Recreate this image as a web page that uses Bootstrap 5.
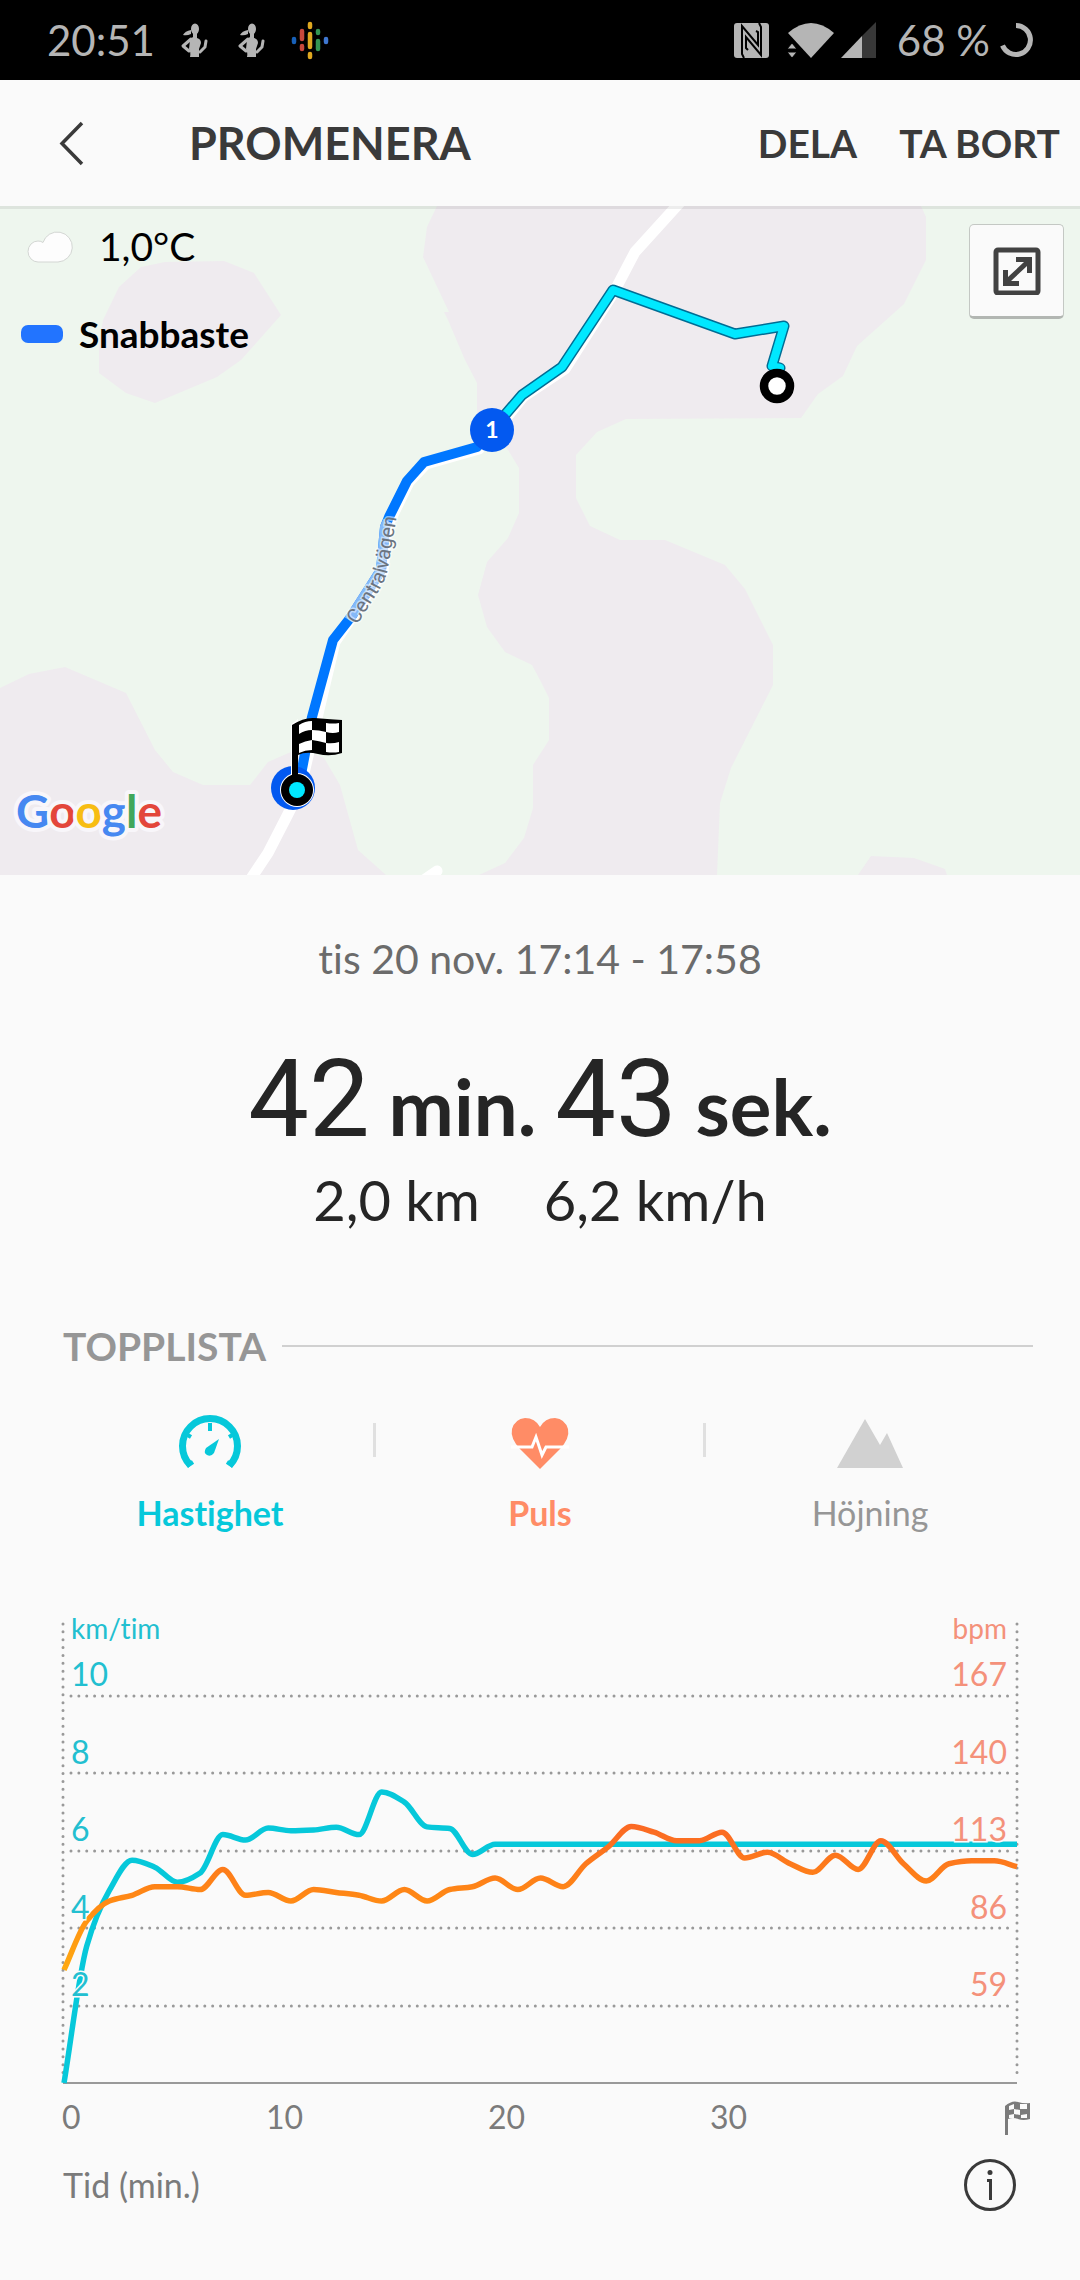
<!DOCTYPE html>
<html lang="sv">
<head>
<meta charset="utf-8">
<meta name="viewport" content="width=device-width, initial-scale=1">
<title>Promenera</title>
<link href="https://cdn.jsdelivr.net/npm/bootstrap@5.3.0/dist/css/bootstrap.min.css" rel="stylesheet">
<style>
  :root { --ink: #3a3a3a; --speed: #06c8da; --pulse: #ff8c66; --muted-ink: #969696; }
  body { font-family: Lato, "Noto Sans", sans-serif; font-variant-ligatures: none; background: #fafafa; color: #252525; }
  button { font-family: inherit; font-variant-ligatures: none; }
  svg { display: block; }
  .status-bar { height: 80px; background: #000; color: #b5b5b5; font-size: 42px; line-height: 80px; font-weight: 400; padding: 0 46px 0 47px; }
  .app-bar { height: 126px; padding: 0 20px 0 48px; background: #fafafa; color: var(--ink); position: relative; z-index: 2; box-shadow: 0 3px 0 rgba(0,0,0,.07); }
  .app-bar h1 { font-size: 45px; line-height: 56px; font-weight: 700; }
  .app-bar .btn { color: var(--ink); line-height: 56px; }
  .bar-actions { gap: 42px; }
  .bar-action { font-size: 39px; font-weight: 700; }
  .back-btn { margin-right: 94px; }
  .status-left { gap: 21px; }
  .status-level { margin: 0 8px 0 20px; }
  .map-legend { position: absolute; top: 12px; left: 21px; color: #000; }
  .map-temp { font-size: 39px; line-height: 56px; font-weight: 400; }
  .map-fastest { font-size: 37px; line-height: 48px; font-weight: 700; margin-top: 36px; }
  .swatch { width: 42px; height: 18px; border-radius: 7px; background: #2274ff; }
  .expand-btn { position: absolute; top: 18px; right: 16px; width: 95px; height: 95px; background: #fafafa; border: 1px solid #c4c8c4; border-bottom: 3px solid #b2b6b2; border-radius: 5px; }
  .when { font-size: 41px; line-height: 56px; color: #6b6b6b; margin-top: 56px; }
  .duration { font-size: 78px; line-height: 120px; font-weight: 700; margin-top: 52px; }
  .duration .num { font-family: Roboto, sans-serif; font-size: 108px; font-weight: 400; }
  .totals { font-size: 56px; line-height: 68px; gap: 64px; }
  .toplist-head { margin: 84px 47px 0 63px; gap: 16px; }
  .toplist-head h2 { font-size: 39px; line-height: 56px; font-weight: 700; color: var(--muted-ink); }
  .toplist-head .rule { height: 2px; background: #d0d0d0; }
  .metrics { margin: 41px 45px 0; }
  .metric { font-size: 34px; line-height: 40px; color: var(--muted-ink); border: 0; }
  .metric svg { height: 56px; margin-bottom: 22px; }
  .metric-sep { width: 3px; height: 34px; background: #e0e0e0; margin: 8px -1px 0 -2px; }
  .is-speed { color: var(--speed); font-weight: 700; }
  .is-pulse { color: var(--pulse); font-weight: 700; }
  .chart { margin-top: 66px; }
  .tick { font-size: 32px; }
  .unit { font-size: 28px; }
  .halo { stroke: #fafafa; stroke-width: 3px; paint-order: stroke; }
  .dots { stroke: #999; stroke-width: 3; stroke-linecap: round; stroke-dasharray: 0 7.87; }
  .chart-foot { padding: 0 63px; margin-top: 14px; color: #7b7b7b; font-size: 34px; line-height: 56px; }
</style>
</head>
<body>

<div class="status-bar d-flex align-items-center justify-content-between">
  <div class="status-left d-flex align-items-center">
    <span>20:51</span>
    <svg width="36" height="40" viewBox="2 0 36 40" fill="#b5b5b5">
      <g id="runner"><ellipse cx="21" cy="9" rx="4" ry="5.500"/><path d="M17 10q-6 1-8 5q4 1 8-1z"/><path d="M19 13h4v5q4 1 4 5l-2 6v8h-9q1-5-1-8l1-9q1-2 3-3z"/><path d="M17 19L9 26L15 31M26 32L31 27L32 21" fill="none" stroke="#b5b5b5" stroke-width="3" stroke-linejoin="round" stroke-linecap="round"/></g>
    </svg>
    <svg width="36" height="40" viewBox="2 0 36 40" fill="#b5b5b5"><use href="#runner"/></svg>
    <svg width="40" height="40" viewBox="0 0 40 40" stroke-width="4.500" stroke-linecap="round">
      <path stroke="#1860b8" d="M4 19v3"/><path stroke="#c8483c" d="M12 11v8M12 26v3"/><path stroke="#dfa820" d="M20 4v3M20 14v13M20 34v3"/><path stroke="#349552" d="M28 11v2M28 21v8"/><path stroke="#3f78d0" d="M36 19v3"/>
    </svg>
  </div>
  <div class="d-flex align-items-center">
    <svg width="35" height="35" viewBox="0 0 35 35"><rect width="35" height="35" rx="3" fill="#b5b5b5"/><path d="M10 35L8 31V3L24 22V9L22 8M25 0L27 4V32L12 14V25L14 27" fill="none" stroke="#000" stroke-width="2"/></svg>
    <svg class="ms-3" width="52" height="36" viewBox="0 0 52 36" fill="#b5b5b5"><path d="M3 11Q26-9 49 11L26 36z"/><path d="M2 27l5-6l5 6zM2 30h10l-5 6z" stroke="#000" stroke-width="1"/></svg>
    <svg class="ms-1" width="36" height="36" viewBox="0 0 36 36"><path d="M35 0V36H21V14z" fill="#383838"/><path d="M21 14V36H0z" fill="#b5b5b5"/></svg>
    <span class="status-level">68&nbsp;%</span>
    <svg width="36" height="36" viewBox="0 0 36 36"><path d="M18 3.500A14.500 14.500 0 1 1 4.500 23.500" fill="none" stroke="#b5b5b5" stroke-width="5"/></svg>
  </div>
</div>

<header class="app-bar d-flex align-items-center">
  <button class="btn back-btn border-0 p-0" type="button" aria-label="Tillbaka">
    <svg width="47" height="48" viewBox="0 0 47 48"><path d="M34 4L14 24.500L34 45" fill="none" stroke="#3a3a3a" stroke-width="3.500"/></svg>
  </button>
  <h1 class="m-0 me-auto">PROMENERA</h1>
  <div class="bar-actions d-flex">
    <button class="btn bar-action border-0 p-0" type="button">DELA</button>
    <button class="btn bar-action border-0 p-0" type="button">TA BORT</button>
  </div>
</header>

<main>
  <section class="position-relative" aria-label="Karta">
    <svg width="100%" viewBox="0 206 1080 669">
      <rect y="206" width="1080" height="669" fill="#eef6ee"/>
      <g fill="#efebef">
        <path d="M165 262L224 261L254 273L281 315L241 360L217 377L155 403L126 393L99 373V345L103 320L119 287L141 267z"/>
        <path d="M437 206L427 227L423 257L449 312H444L448 320L465 360L477 383V417L508 450L519 468V513L508 538L487 562L478 595L487 627L505 652L532 665L540 680L549 698V740L533 765V808L524 838L505 863L479 875H717L720 803L731 768L773 685V645L745 589L725 565L665 540H620L590 526L576 498V455L597 432L626 419L801 418L818 394L843 376L857 346L904 304L926 260V217L921 206z"/>
        <path d="M0 688L29 674L65 667L126 693L155 750L173 772L203 785H250L268 762L300 748L324 758L340 785L358 850L386 875H0z"/>
        <path d="M858 875L871 856L914 858L945 869L947 875z"/>
      </g>
      <g fill="none" stroke="#fff" stroke-width="11" stroke-linejoin="round">
        <path d="M684 198L635 252L614 292L565 369L523 397L495 432L479 449L426 464L409 482L387 527L383 572L335 642L300 790L287 816L268 853L250 880"/>
        <path d="M424 880L437 871" stroke-linecap="round"/>
      </g>
      <g fill="none" stroke-linejoin="round" stroke-linecap="round">
        <path d="M492 430L477 447L424 462L407 481L389 517L385 527L381 570L351 617L333 640L312 717L298 790" stroke="#0077ff" stroke-width="10"/>
        <path d="M388 521L385 527L381 570L349 620" stroke="#84b8f8" stroke-width="10" stroke-linecap="butt"/>
        <path d="M780 368L772 366L784 326L735 334L613 290L562 367L522 395L492 430" stroke="#006d94" stroke-width="11"/>
        <path d="M780 368L772 366L784 326L735 334L613 290L562 367L522 395L492 430" stroke="#00e8ff" stroke-width="8"/>
      </g>
      <path id="roadName" d="M357 625L380 589Q386 578 388 568L398 508" fill="none"/>
      <text font-family="Roboto, sans-serif" font-size="20" fill="#6b7480" stroke="#fff" stroke-opacity=".5" stroke-width="3" paint-order="stroke"><textPath href="#roadName">Centralvägen</textPath></text>
      <circle cx="492" cy="430" r="22" fill="#0359f0"/>
      <text x="492" y="438" text-anchor="middle" font-size="23" font-weight="700" fill="#fff">1</text>
      <circle cx="777" cy="386" r="13" fill="#fff" stroke="#000" stroke-width="8.500"/>
      <circle cx="293" cy="788" r="22" fill="#0359f0"/>
      <path d="M292 725L297 721V778H292z" stroke="#fff" stroke-width="2"/>
      <circle cx="297" cy="790" r="17" fill="#fff"/><circle cx="297" cy="790" r="16"/><circle cx="297" cy="790" r="8" fill="#00e8ff"/>
      <path d="M292 725Q304 717 315 718T342 720V753Q330 757 318 754T298 755V782H292z"/>
      <g fill="#fff">
        <path d="M299 725Q305 721 312 721V730Q305 730 299 734zM326 723Q333 724 339 723V732Q333 734 326 732zM312 730Q319 730 326 732V743Q319 741 312 740zM299 744Q305 741 312 740V750Q305 750 299 753zM326 743Q333 744 339 742V752Q333 753 326 752z"/>
      </g>
      <text x="16" y="828" font-size="46" font-weight="700" stroke="#f8f6fa" stroke-width="8" stroke-linejoin="round" paint-order="stroke"><tspan fill="#4688f1">G</tspan><tspan fill="#e3463b">o</tspan><tspan fill="#f7bd13">o</tspan><tspan fill="#4688f1">g</tspan><tspan fill="#41a75c">l</tspan><tspan fill="#e3463b">e</tspan></text>
    </svg>

    <div class="map-legend">
      <div class="map-temp d-flex align-items-center">
        <svg width="78" height="40" viewBox="0 0 78 40"><path d="M17 36a9.500 10 0 0 1 0-21q3 0 5 1.500a15 15 0 1 1 15 19.500z" fill="#fdfdfd" stroke="#d3d6d3" stroke-width="1"/></svg>
        <span>1,0°C</span>
      </div>
      <div class="map-fastest d-flex align-items-center gap-3"><span class="swatch"></span><span>Snabbaste</span></div>
    </div>
    <button class="expand-btn p-0 d-flex align-items-center justify-content-center" type="button" aria-label="Visa hela kartan">
      <svg width="48" height="48" viewBox="0 0 48 48"><rect x="3" y="3" width="42" height="43" rx="2" fill="none" stroke="#424242" stroke-width="5"/><path d="M23 10H39V26H34V19L18 34H26V39H10V23H15V30L31 15H23z" fill="#424242"/></svg>
    </button>
  </section>

  <section class="text-center">
    <div class="when">tis 20 nov. 17:14 - 17:58</div>
    <div class="duration"><span class="num">42</span> min. <span class="num">43</span> sek.</div>
    <div class="totals d-flex justify-content-center"><span>2,0 km</span><span>6,2 km/h</span></div>
  </section>

  <section>
    <div class="toplist-head d-flex align-items-center">
      <h2 class="m-0">TOPPLISTA</h2><span class="rule flex-fill"></span>
    </div>
    <div class="metrics d-flex">
      <button class="metric is-speed btn p-0 flex-fill w-100" type="button">
        <svg class="mx-auto" width="64" viewBox="0 0 64 56" fill="none" stroke="#06c8da"><path d="M12.500 50.500A27.500 27.500 0 1 1 51.500 50.500" stroke-width="7"/><path d="M32 8V16M13 22l-5-3M51 22l5-3M15 47L9 51M49 47L55 51" stroke-width="4"/><path d="M41 24L36 38Q33 42 29 40T28 33z" fill="#06c8da" stroke="none"/></svg>
        Hastighet
      </button>
      <span class="metric-sep flex-shrink-0"></span>
      <button class="metric is-pulse btn p-0 flex-fill w-100" type="button">
        <svg class="mx-auto" width="64" viewBox="0 0 64 56"><path d="M32 54L12 34Q2 23 4 14Q7 4 17 3Q27 3 32 12Q37 3 47 3Q57 4 60 14Q62 23 52 34z" fill="#ff8c66"/><path d="M3 32H24L28 22L34 40L38 32H61" fill="none" stroke="#fff" stroke-width="3"/></svg>
        Puls
      </button>
      <span class="metric-sep flex-shrink-0"></span>
      <button class="metric btn p-0 flex-fill w-100" type="button">
        <svg class="mx-auto" width="66" viewBox="0 0 66 56" fill="#d1d1d1"><path d="M0 53L28 4L43 30L50 18L66 53z"/></svg>
        Höjning
      </button>
    </div>

    <div class="chart">
      <svg width="100%" viewBox="0 0 1080 544" fill="#7b7b7b">
        <defs><linearGradient id="pulseInk" gradientUnits="userSpaceOnUse" x1="0" y1="215" x2="0" y2="375"><stop offset="0" stop-color="#fa6426"/><stop offset=".55" stop-color="#ff8a14"/><stop offset="1" stop-color="#ffab10"/></linearGradient></defs>
        <g class="dots">
          <path d="M63 25V476M1017 25V476"/>
          <path d="M71 97H1010M71 174H1010M71 252H1010M71 329H1010M71 407H1010"/>
        </g>
        <path d="M63 484H1017" stroke="#999" stroke-width="2"/>
        <path id="speedLine" fill="none" stroke="#06c8da" stroke-width="5.500"/>
        <path id="pulseLine" fill="none" stroke="url(#pulseInk)" stroke-width="5.500"/>
        <g class="halo" fill="#22bfd0">
          <text class="unit" x="71" y="40">km/tim</text>
          <g class="tick"><text x="71" y="87">10</text><text x="71" y="165">8</text><text x="71" y="242">6</text><text x="71" y="320">4</text><text x="71" y="397">2</text></g>
        </g>
        <g class="halo" fill="#f4917a" text-anchor="end">
          <text class="unit" x="1007" y="40">bpm</text>
          <g class="tick"><text x="1007" y="87">167</text><text x="1007" y="165">140</text><text x="1007" y="242">113</text><text x="1007" y="320">86</text><text x="1007" y="397">59</text></g>
        </g>
        <g class="tick"><text x="62" y="530">0</text><text x="266" y="530">10</text><text x="488" y="530">20</text><text x="710" y="530">30</text></g>
        <g transform="translate(1005 502)"><path d="M0 5Q7-1 13 1T25 2V18Q18 20 13 18T3 18V34H0z"/><path d="M4 5L9 3V8L4 9zM15 3H22V8H15zM9 8L15 9V14L9 13zM4 14L9 13V17H4zM16 14L22 13V17L16 17z" fill="#fafafa"/></g>
      </svg>
    </div>
    <div class="chart-foot d-flex align-items-center justify-content-between">
      <span>Tid (min.)</span>
      <button class="btn border-0 p-0" type="button" aria-label="Information">
        <svg width="54" height="54" viewBox="0 0 54 54"><circle cx="27" cy="27" r="24.500" fill="none" stroke="#3a3a3a" stroke-width="3"/><circle cx="27" cy="14.500" r="2.500" fill="#3a3a3a"/><path d="M24 22.500H27.500V42" fill="none" stroke="#3a3a3a" stroke-width="3"/></svg>
      </button>
    </div>
  </section>
</main>

<script src="https://cdn.jsdelivr.net/npm/bootstrap@5.3.0/dist/js/bootstrap.bundle.min.js"></script>
<script>
  const speed = [0, 3.53, 4.97, 5.75, 5.57, 5.18, 5.42, 6.41, 6.27, 6.58, 6.51, 6.53, 6.6, 6.41, 7.51, 7.25, 6.61, 6.57, 5.9].concat(Array(24).fill(6.16));
  const pulse = [71, 88, 95, 97, 100, 100, 99, 106, 97, 98, 95, 99, 98, 97, 95, 99, 95, 99, 100, 103, 99, 103, 100, 108, 114, 121, 119, 116, 116, 119, 110, 112, 108, 105, 111, 106, 116, 108, 102, 108, 109, 109, 107];
  // Monotone cubic curve through evenly spaced samples.
  function curve(ys) {
    const n = ys.length, step = 953 / (n - 1), d = [], m = [];
    for (let i = 0; i < n - 1; i++) d.push(ys[i + 1] - ys[i]);
    for (let i = 0; i < n; i++) {
      if (i === 0) m.push(d[0]);
      else if (i === n - 1) m.push(d[n - 2]);
      else m.push(d[i - 1] * d[i] <= 0 ? 0 : 2 * d[i - 1] * d[i] / (d[i - 1] + d[i]));
    }
    let p = `M64 ${ys[0]}`;
    for (let i = 0; i < n - 1; i++) {
      const x = 64 + i * step;
      p += `C${x + step / 3} ${ys[i] + m[i] / 3} ${x + step * 2 / 3} ${ys[i + 1] - m[i + 1] / 3} ${x + step} ${ys[i + 1]}`;
    }
    return p;
  }
  document.getElementById('speedLine').setAttribute('d', curve(speed.map(v => 484 - v * 38.75)));
  document.getElementById('pulseLine').setAttribute('d', curve(pulse.map(v => 287.7 - (v - 100) * 2.87)));
</script>
</body>
</html>
